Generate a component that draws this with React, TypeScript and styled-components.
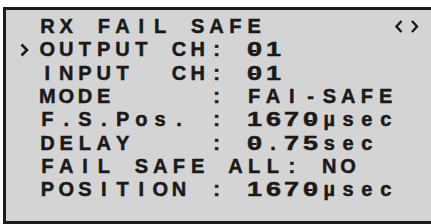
import React from "react";
import styled, { createGlobalStyle, css } from "styled-components";

const Global = createGlobalStyle`
  html, body { margin: 0; padding: 0; background: #ffffff; }
  body { width: 431px; height: 224px; overflow: hidden; }
`;

const CELL = 18.8;

const Screen = styled.div`
  margin: 7px 0 0 3px;
  height: 205.8px;
  border: 3px solid #1c1c1c;
  border-right: none;
  background: #d4d4d4;
  padding: 5.2px 0 0 13.2px;
  box-sizing: content-box;
  overflow: hidden;
  font-family: "Liberation Sans", Arial, sans-serif;
  font-weight: bold;
  font-size: 20px;
  line-height: 23.3px;
  color: #1a1a1a;
  -webkit-text-stroke: 0.5px #1a1a1a;
`;

const Row = styled.div`
  display: flex;
  align-items: center;
  height: 23.3px;
`;

const Cell = styled.span<{ $digit?: boolean; $zero?: boolean }>`
  display: inline-block;
  position: relative;
  flex: none;
  width: ${CELL}px;
  text-align: center;
  ${(p) =>
    p.$digit &&
    css`
      transform: scaleX(1.35);
    `}
  ${(p) =>
    p.$zero &&
    css`
      &::after {
        content: "";
        position: absolute;
        left: 50%;
        top: 50%;
        width: 4px;
        height: 2px;
        margin: -0.5px 0 0 -2px;
        background: #1a1a1a;
      }
    `}
`;

const Marker = styled.span`
  display: flex;
  align-items: center;
  flex: none;
  width: ${CELL}px;
  height: 23.3px;
  padding-left: 1px;
  box-sizing: border-box;
`;

const Arrows = styled.svg`
  margin-left: auto;
  margin-right: 12px;
  display: block;
  flex: none;
`;

const Text = ({ s }: { s: string }) => (
  <>
    {Array.from(s).map((ch, i) => (
      <Cell key={i} $digit={/[0-9]/.test(ch)} $zero={ch === "0"}>
        {ch === " " ? "\u00a0" : ch}
      </Cell>
    ))}
  </>
);

const Chevron = () => (
  <svg width="9" height="14" viewBox="0 0 9 14">
    <polyline points="1.5,1.5 7,7 1.5,12.5" fill="none" stroke="#1a1a1a" strokeWidth="2.6" />
  </svg>
);

type Line = { text: string; selected?: boolean };

const lines: Line[] = [
  { text: "OUTPUT CH: 01", selected: true },
  { text: "INPUT  CH: 01" },
  { text: "MODE     : FAI-SAFE" },
  { text: "F.S.Pos. : 1670µsec" },
  { text: "DELAY    : 0.75sec" },
  { text: "FAIL SAFE ALL: NO" },
  { text: "POSITION : 1670µsec" },
];

export default function App() {
  return (
    <>
      <Global />
      <Screen>
        <Row>
          <Marker />
          <Text s="RX FAIL SAFE" />
          <Arrows width="24" height="13" viewBox="0 0 24 13">
            <polyline points="6.5,1 1.5,6.5 6.5,12" fill="none" stroke="#1a1a1a" strokeWidth="2.4" />
            <polyline points="17,1 22,6.5 17,12" fill="none" stroke="#1a1a1a" strokeWidth="2.4" />
          </Arrows>
        </Row>
        {lines.map((l) => (
          <Row key={l.text}>
            <Marker>{l.selected ? <Chevron /> : null}</Marker>
            <Text s={l.text} />
          </Row>
        ))}
      </Screen>
    </>
  );
}
